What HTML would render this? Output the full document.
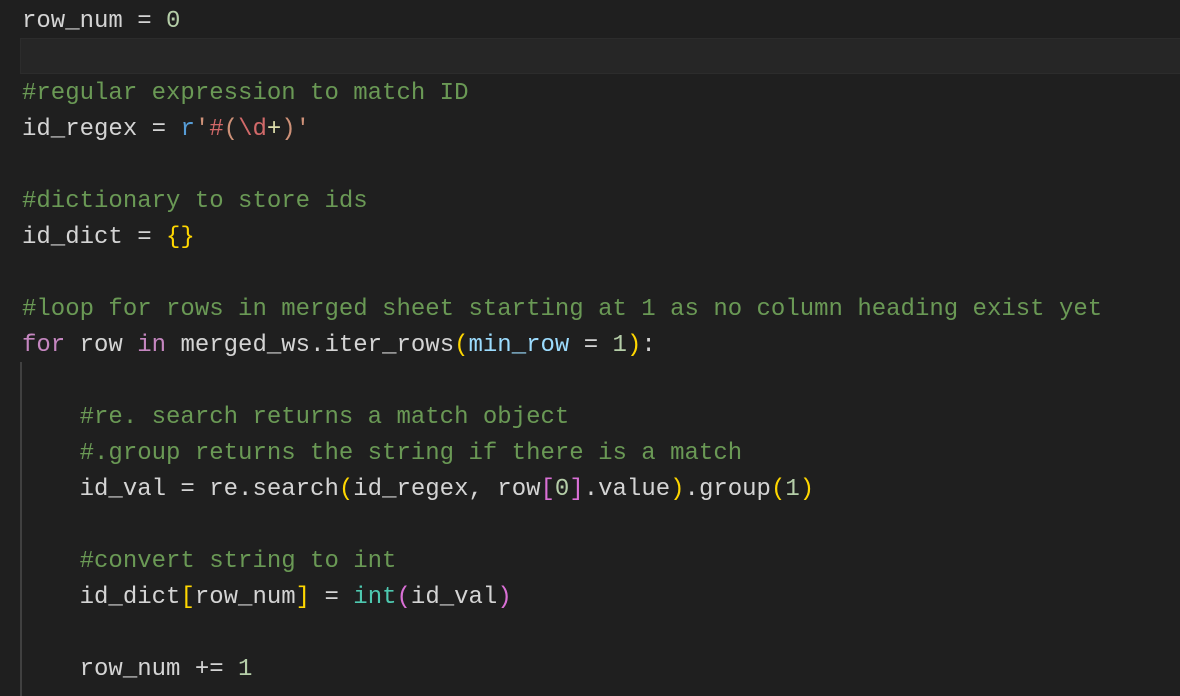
<!DOCTYPE html><html><head><style>
body{margin:0;background:#1f1f1f;width:1180px;height:696px;overflow:hidden;position:relative}
pre{margin:0;position:absolute;left:22px;top:4px;font:24px/36px "Liberation Mono",monospace;color:#d4d4d4}
.c{color:#6a9955}.n{color:#b5cea8}.k{color:#569cd6}.s{color:#ce9178}.r{color:#d16969}.p{color:#c586c0}.y{color:#ffd700}.m{color:#da70d6}.t{color:#4ec9b0}.v{color:#9cdcfe}.o{color:#dcdcaa}
.hl{position:absolute;left:20px;top:38px;width:1170px;height:34px;background:#262626;border:1px solid #2c2c2c}
.g{position:absolute;left:20px;top:362px;width:2px;height:334px;background:#404040}
</style></head><body><div class="hl"></div><div class="g"></div><pre>row_num = <span class="n">0</span>

<span class="c">#regular expression to match ID</span>
id_regex = <span class="k">r</span><span class="s">'</span><span class="r">#</span><span class="s">(</span><span class="r">\d</span><span class="o">+</span><span class="s">)'</span>

<span class="c">#dictionary to store ids</span>
id_dict = <span class="y">{}</span>

<span class="c">#loop for rows in merged sheet starting at 1 as no column heading exist yet</span>
<span class="p">for</span> row <span class="p">in</span> merged_ws.iter_rows<span class="y">(</span><span class="v">min_row</span> = <span class="n">1</span><span class="y">)</span>:

    <span class="c">#re. search returns a match object</span>
    <span class="c">#.group returns the string if there is a match</span>
    id_val = re.search<span class="y">(</span>id_regex, row<span class="m">[</span><span class="n">0</span><span class="m">]</span>.value<span class="y">)</span>.group<span class="y">(</span><span class="n">1</span><span class="y">)</span>

    <span class="c">#convert string to int</span>
    id_dict<span class="y">[</span>row_num<span class="y">]</span> = <span class="t">int</span><span class="m">(</span>id_val<span class="m">)</span>

    row_num += <span class="n">1</span></pre></body></html>
